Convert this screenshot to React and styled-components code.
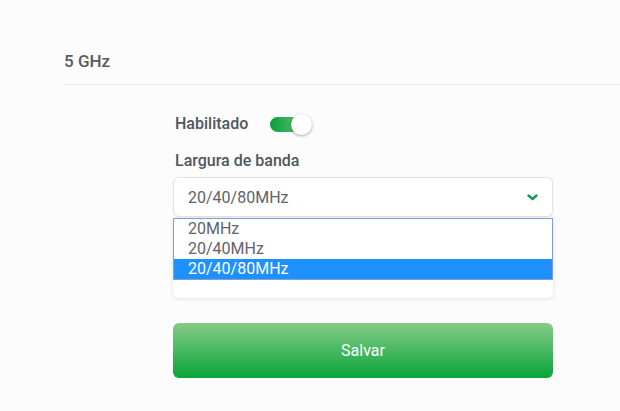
import React from 'react';
import styled, { createGlobalStyle } from 'styled-components';

const Global = createGlobalStyle`
	body {
		margin: 0;
		background: #fcfcfc;
		font-family: Roboto, "Liberation Sans", sans-serif;
	}
`;

const Page = styled.div`
	width: 620px;
	height: 411px;
	overflow: hidden;
`;

const SectionHeader = styled.h2`
	margin: 0 0 0 64px;
	padding: 51px 0 13px;
	font-size: 17px;
	line-height: 20px;
	font-weight: 500;
	color: #555b61;
	border-bottom: 1px solid #ececec;
`;

const Form = styled.div`
	display: flex;
	flex-direction: column;
	width: 380px;
	margin: 27px 0 0 173px;
`;

const Row = styled.div`
	display: flex;
	align-items: center;
	gap: 22px;
	height: 24px;
	padding-left: 2px;
`;

const Label = styled.span`
	font-size: 16px;
	line-height: 20px;
	font-weight: 500;
	color: #4d5760;
`;

const FieldLabel = styled(Label)`
	display: block;
	margin-top: 15px;
	padding-left: 2px;
`;

const Track = styled.div`
	position: relative;
	width: 36px;
	height: 15px;
	border-radius: 8px;
	background: linear-gradient(90deg, #0a9e3c, #66c774);
`;

const Thumb = styled.div`
	position: absolute;
	top: 50%;
	right: -6px;
	width: 21px;
	height: 21px;
	margin-top: -10.5px;
	border-radius: 50%;
	background: #fff;
	box-shadow: 0 1px 3px rgba(0, 0, 0, 0.35);
`;

const SelectBox = styled.div`
	display: flex;
	align-items: center;
	justify-content: space-between;
	height: 38px;
	margin-top: 6px;
	padding: 0 14px 0 14px;
	background: #fff;
	border: 1px solid #e3e3e3;
	border-radius: 6px;
	box-shadow: 0 1px 3px rgba(0, 0, 0, 0.06);
	font-size: 16px;
	color: #5f6368;
`;

const DropPanel = styled.div`
	margin-top: 1px;
	padding-bottom: 18px;
	background: #fff;
	border-radius: 0 0 6px 6px;
	box-shadow: 0 1px 4px rgba(0, 0, 0, 0.12);
`;

const ListBox = styled.ul`
	margin: 0;
	padding: 0;
	list-style: none;
	border: 1px solid #7f9fd6;
`;

const Option = styled.li`
	height: 20px;
	line-height: 20px;
	padding-left: 14px;
	font-size: 16px;
	color: ${(p) => (p.$selected ? '#fff' : '#5f6368')};
	background: ${(p) => (p.$selected ? '#1e90ff' : 'transparent')};
`;

const SaveButton = styled.button`
	height: 55px;
	margin-top: 25px;
	border: none;
	border-radius: 6px;
	background: linear-gradient(180deg, #86cb88 0%, #0aa53a 100%);
	color: #fff;
	font-family: inherit;
	font-size: 16px;
	cursor: pointer;
`;

function Chevron() {
	return (
		<svg width="11" height="7" viewBox="0 0 11 7">
			<path d="M1.5 1.5 L5.5 5 L9.5 1.5" fill="none" stroke="#0f9d58" strokeWidth="2.4" strokeLinecap="round" strokeLinejoin="round" />
		</svg>
	);
}

const OPTIONS = ['20MHz', '20/40MHz', '20/40/80MHz'];

export default function App() {
	const selected = '20/40/80MHz';
	return (
		<Page>
			<Global />
			<SectionHeader>5 GHz</SectionHeader>
			<Form>
				<Row>
					<Label>Habilitado</Label>
					<Track><Thumb /></Track>
				</Row>
				<FieldLabel>Largura de banda</FieldLabel>
				<SelectBox>
					<span>{selected}</span>
					<Chevron />
				</SelectBox>
				<DropPanel>
					<ListBox>
						{OPTIONS.map((o) => (
							<Option key={o} $selected={o === selected}>{o}</Option>
						))}
					</ListBox>
				</DropPanel>
				<SaveButton>Salvar</SaveButton>
			</Form>
		</Page>
	);
}
